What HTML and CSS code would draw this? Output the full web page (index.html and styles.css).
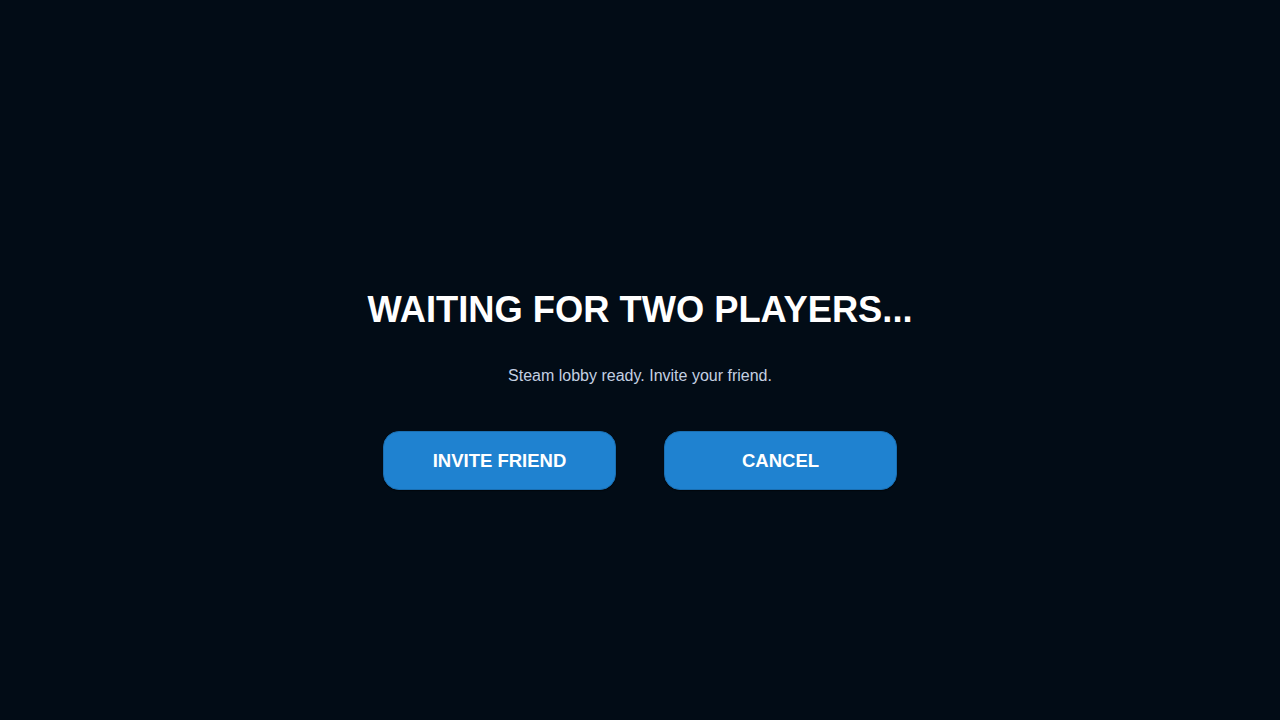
FILE: index.html
```html
<!DOCTYPE html>
<html lang="en">
<head>
    <meta charset="UTF-8">
    <title>Lobby</title>
    <link rel="stylesheet" href="styles.css">
</head>
<body>
    <div class="lobby">
        <h1 class="lobby-title">WAITING FOR TWO PLAYERS...</h1>
        <p class="lobby-status">Steam lobby ready. Invite your friend.</p>
        <div class="lobby-actions">
            <button class="lobby-button">INVITE FRIEND</button>
            <button class="lobby-button">CANCEL</button>
        </div>
    </div>
</body>
</html>
```

FILE: styles.css
```css
* {
    margin: 0;
    padding: 0;
    box-sizing: border-box;
    font-family: 'Liberation Sans', Arial, sans-serif;
}

body {
    height: 100vh;
    background-color: #020c16;
    display: flex;
    align-items: center;
    justify-content: center;
    overflow: hidden;
}

.lobby {
    display: flex;
    flex-direction: column;
    align-items: center;
    margin-top: 62px;
}

.lobby-title {
    color: #ffffff;
    font-size: 36.3px;
    font-weight: 700;
    line-height: 1;
}

.lobby-status {
    margin-top: 39px;
    color: #c4d0e2;
    font-size: 16px;
}

.lobby-actions {
    display: flex;
    gap: 48px;
    margin-top: 46px;
}

.lobby-button {
    width: 233px;
    height: 59px;
    border: 1px solid #1a6fb2;
    border-radius: 16px;
    background-color: #1f82d0;
    color: #ffffff;
    font-size: 18.5px;
    font-weight: 700;
    box-shadow: 0 1px 1px rgba(0, 0, 0, 0.5);
    cursor: pointer;
}
```
